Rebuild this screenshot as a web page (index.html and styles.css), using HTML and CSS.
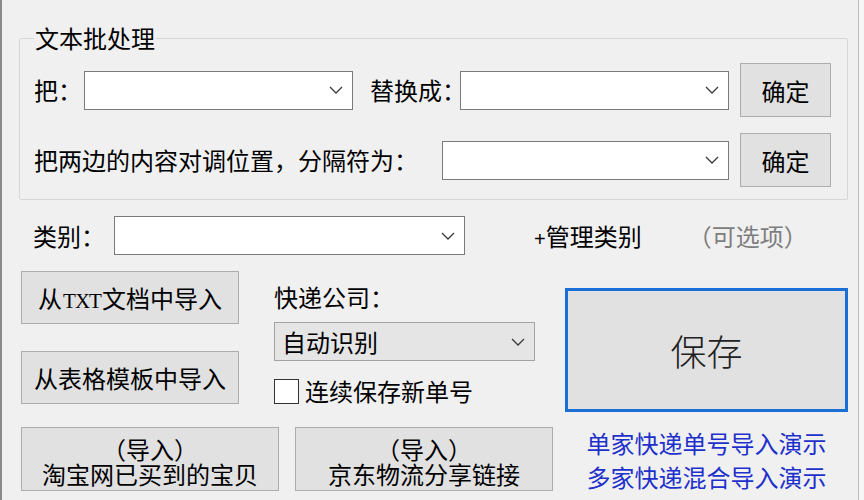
FILE: index.html
```html
<!DOCTYPE html>
<html lang="zh-CN">
<head>
<meta charset="utf-8">
<title>文本批处理</title>
<link rel="stylesheet" href="styles.css">
</head>
<body>
<div class="window">
  <fieldset class="group">
    <legend>文本批处理</legend>
    <div class="row">
      <span class="label l-ba">把：</span>
      <div class="combo w269"><svg class="chev" width="14" height="8" viewBox="0 0 14 8"><polyline points="1,1 7,7 13,1"/></svg></div>
      <span class="label l-th">替换成：</span>
      <div class="combo w269"><svg class="chev" width="14" height="8" viewBox="0 0 14 8"><polyline points="1,1 7,7 13,1"/></svg></div>
      <button class="btn ok">确定</button>
    </div>
    <div class="row">
      <span class="label l-swap">把两边的内容对调位置，分隔符为：</span>
      <div class="combo w287"><svg class="chev" width="14" height="8" viewBox="0 0 14 8"><polyline points="1,1 7,7 13,1"/></svg></div>
      <button class="btn ok">确定</button>
    </div>
  </fieldset>

  <div class="cat-row">
    <span class="label l-cat">类别：</span>
    <div class="combo w351"><svg class="chev" width="14" height="8" viewBox="0 0 14 8"><polyline points="1,1 7,7 13,1"/></svg></div>
    <span class="manage"><span class="plus">+</span>管理类别</span>
    <span class="optional">（可选项）</span>
  </div>

  <div class="main">
    <div class="left">
      <div class="left-top">
        <div class="import-col">
          <button class="btn imp">从<span class="latin">TXT</span>文档中导入</button>
          <button class="btn imp">从表格模板中导入</button>
        </div>
        <div class="express-col">
          <div class="exp-label">快递公司：</div>
          <div class="combo gray"><span class="val">自动识别</span><svg class="chev" width="14" height="8" viewBox="0 0 14 8"><polyline points="1,1 7,7 13,1"/></svg></div>
          <label class="check"><span class="box"></span>连续保存新单号</label>
        </div>
      </div>
      <div class="left-bottom">
        <button class="btn two"><span class="ln">（导入）</span><span class="ln">淘宝网已买到的宝贝</span></button>
        <button class="btn two"><span class="ln">（导入）</span><span class="ln">京东物流分享链接</span></button>
      </div>
    </div>
    <div class="right">
      <button class="btn save">保存</button>
      <div class="links">
        <a class="link">单家快递单号导入演示</a>
        <a class="link">多家快递混合导入演示</a>
      </div>
    </div>
  </div>
</div>
</body>
</html>
```

FILE: styles.css
```css
html, body {
  margin: 0;
  padding: 0;
  background: #f6f6f6;
}
body {
  font-family: "Noto Sans CJK SC", "Noto Sans", sans-serif;
  font-size: 24px;
  color: #000;
}
.window {
  width: 859px;
  height: 500px;
  box-sizing: border-box;
  border-left: 2px solid #8a8a8a;
  border-right: 1px solid #bdbdbd;
  background: #f0f0f0;
  overflow: hidden;
}
.group {
  margin: 24px 0 0 17px;
  width: 829px;
  box-sizing: border-box;
  border: 1px solid #d6d6d6;
  border-radius: 2px;
  padding: 11px 16px 12px 14px;
  min-width: 0;
}
.group legend {
  padding: 0 1px;
  font-size: 24px;
  line-height: 28px;
}
.row {
  display: flex;
  align-items: center;
  height: 54px;
}
.row + .row {
  margin-top: 16px;
}
.label {
  flex: none;
  white-space: nowrap;
  line-height: 30px;
}
.l-ba { width: 50px; }
.l-th { width: 90px; margin-left: 17px; }
.l-swap { width: 408px; }
.combo {
  flex: none;
  box-sizing: border-box;
  height: 39px;
  background: #fff;
  border: 1px solid #7a7a7a;
  display: flex;
  align-items: center;
  justify-content: flex-end;
  padding-right: 9px;
}
.w269 { width: 269px; }
.w287 { width: 287px; }
.w351 { width: 351px; }
.chev {
  flex: none;
}
.chev polyline {
  fill: none;
  stroke: #3a3a3a;
  stroke-width: 1.3;
}
.btn {
  font-family: inherit;
  font-size: 24px;
  color: #000;
  background: #e1e1e1;
  border: 1px solid #adadad;
  border-radius: 0;
  padding: 0;
  margin: 0;
  box-sizing: border-box;
  flex: none;
}
.ok {
  width: 91px;
  height: 54px;
  margin-left: 11px;
}
.cat-row {
  display: flex;
  align-items: center;
  margin: 16px 0 0 31px;
  height: 39px;
}
.l-cat { width: 81px; }
.manage {
  margin-left: 69px;
  white-space: nowrap;
}
.plus {
  font-family: "Liberation Sans", sans-serif;
  font-size: 20px;
}
.optional {
  margin-left: 46px;
  color: #7d7d7d;
  white-space: nowrap;
}
.main {
  display: flex;
  margin: 16px 0 0 19px;
}
.left {
  width: 532px;
  display: flex;
  flex-direction: column;
}
.left-top {
  display: flex;
}
.import-col {
  width: 218px;
  display: flex;
  flex-direction: column;
  gap: 27px;
}
.imp {
  width: 218px;
  height: 53px;
}
.btn .latin {
  font-family: "Liberation Serif", serif;
  font-size: 21px;
  letter-spacing: -1px;
  margin: 0 1px 0 1px;
}
.express-col {
  margin-left: 35px;
  width: 261px;
  display: flex;
  flex-direction: column;
}
.exp-label {
  margin-top: 11px;
  line-height: 30px;
}
.combo.gray {
  margin-top: 10px;
  width: 261px;
  background: #e5e5e5;
  border-color: #a3a3a3;
  justify-content: space-between;
  padding-left: 7px;
}
.val {
  line-height: 30px;
}
.check {
  margin-top: 18px;
  display: flex;
  align-items: center;
  height: 24px;
  line-height: 24px;
  white-space: nowrap;
}
.box {
  width: 25px;
  height: 25px;
  box-sizing: border-box;
  border: 1px solid #333;
  background: #fff;
  margin-right: 6px;
  flex: none;
}
.left-bottom {
  display: flex;
  gap: 16px;
  margin-top: 23px;
}
.two {
  width: 258px;
  height: 64px;
  display: flex;
  flex-direction: column;
  align-items: center;
  justify-content: center;
  padding-top: 3px;
}
.ln {
  display: block;
  line-height: 25px;
  white-space: nowrap;
}
.right {
  margin-left: 12px;
  width: 283px;
  display: flex;
  flex-direction: column;
  align-items: center;
}
.save {
  margin-top: 17px;
  width: 283px;
  height: 124px;
  border: 3px solid #1a6fd6;
  font-size: 36px;
  color: #222;
  font-weight: 300;
}
.links {
  margin-top: 14px;
  display: flex;
  flex-direction: column;
  align-items: center;
}
.link {
  color: #1f31cc;
  line-height: 34px;
  text-decoration: none;
  white-space: nowrap;
}
```
